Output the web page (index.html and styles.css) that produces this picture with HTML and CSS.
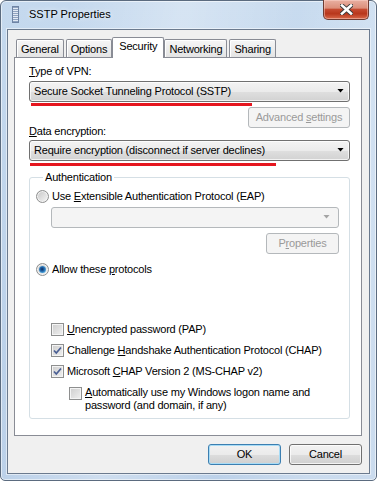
FILE: index.html
```html
<!DOCTYPE html>
<html lang="en">
<head>
    <meta charset="UTF-8">
    <title>SSTP Properties</title>
    <link rel="stylesheet" href="styles.css">
</head>
<body>

    <div class="window">
        <div class="titlebar">
            <svg class="app-icon" width="7" height="17" viewBox="0 0 7 17">
                <rect x="0.5" y="0.5" width="6" height="16" fill="#8fa3c0" stroke="#6f84a4"/>
                <rect x="1" y="2" width="5" height="1" fill="#e3eaf4"/>
                <rect x="1" y="4" width="5" height="1" fill="#e3eaf4"/>
                <rect x="1" y="6" width="5" height="1" fill="#e3eaf4"/>
                <rect x="1" y="8" width="5" height="1" fill="#e3eaf4"/>
                <rect x="1" y="10" width="5" height="1" fill="#e3eaf4"/>
                <rect x="1" y="12" width="5" height="1" fill="#e3eaf4"/>
                <rect x="1" y="14" width="5" height="1" fill="#e3eaf4"/>
            </svg>
            <span class="title">SSTP Properties</span>
            <button class="close" type="button" aria-label="Close">
                <svg width="13" height="11" viewBox="0 0 13 11">
                    <path d="M2 1.5 L11 9.5 M11 1.5 L2 9.5" stroke="#3a3a3a" stroke-width="4.4" stroke-linecap="square" fill="none"/>
                    <path d="M2 1.5 L11 9.5 M11 1.5 L2 9.5" stroke="#fff" stroke-width="2.6" stroke-linecap="square" fill="none"/>
                </svg>
            </button>
        </div>

        <div class="client">
            <ul class="tabs">
                <li class="tab">General</li>
                <li class="tab">Options</li>
                <li class="tab active">Security</li>
                <li class="tab">Networking</li>
                <li class="tab">Sharing</li>
            </ul>

            <div class="panel">
                <div class="label"><u>T</u>ype of VPN:</div>
                <div class="combo">
                    <span>Secure Socket Tunneling Protocol (SSTP)</span>
                    <i class="arrow"></i>
                </div>
                <div class="mark mark-vpn"></div>
                <div class="btn-row">
                    <button class="btn btn-advanced" type="button" disabled>Advanced <u>s</u>ettings</button>
                </div>

                <div class="label label-enc"><u>D</u>ata encryption:</div>
                <div class="combo">
                    <span>Require encryption (disconnect if server declines)</span>
                    <i class="arrow"></i>
                </div>
                <div class="mark mark-enc"></div>

                <fieldset class="group">
                    <legend>Authentication</legend>

                    <div class="option"><span class="radio"></span><span>Use <u>E</u>xtensible Authentication Protocol (EAP)</span></div>
                    <div class="combo combo-disabled">
                        <span></span>
                        <i class="arrow"></i>
                    </div>
                    <div class="btn-row">
                        <button class="btn btn-props" type="button" disabled>P<u>r</u>operties</button>
                    </div>

                    <div class="option option-allow"><span class="radio checked"></span><span>Allow these <u>p</u>rotocols</span></div>

                    <div class="checks">
                        <div class="option"><span class="check"></span><span><u>U</u>nencrypted password (PAP)</span></div>
                        <div class="option"><span class="check checked"></span><span>Challenge <u>H</u>andshake Authentication Protocol (CHAP)</span></div>
                        <div class="option"><span class="check checked"></span><span>Microsoft <u>C</u>HAP Version 2 (MS-CHAP v2)</span></div>
                        <div class="option option-sub"><span class="check"></span><span><u>A</u>utomatically use my Windows logon name and<br>password (and domain, if any)</span></div>
                    </div>
                </fieldset>
            </div>

            <div class="actions">
                <button class="btn btn-default" type="button">OK</button>
                <button class="btn" type="button">Cancel</button>
            </div>
        </div>
    </div>

</body>
</html>
```

FILE: styles.css
```css
* {
  box-sizing: border-box;
}

html, body {
  margin: 0;
  padding: 0;
  background: #fff;
}

body {
  font-family: "Liberation Sans", Arial, sans-serif;
  font-size: 11px;
  letter-spacing: -0.2px;
  color: #000;
}

/* window frame */

.window {
  width: 377px;
  height: 481px;
  display: flex;
  flex-direction: column;
  padding: 0 6px 6px;
  border: 1px solid #5b6b7f;
  border-radius: 6px 6px 5px 5px;
  background:
    linear-gradient(100deg, rgba(255,255,255,0) 15%, rgba(255,255,255,0.3) 40%, rgba(255,255,255,0.05) 65%, rgba(255,255,255,0.25) 85%),
    linear-gradient(#c5d9ee, #b9cfe8);
  box-shadow: inset 0 0 0 1px rgba(255,255,255,0.55);
}

.titlebar {
  height: 28px;
  display: flex;
  align-items: flex-start;
}

.app-icon {
  margin: 5px 0 0 5px;
}

.title {
  margin: 7px 0 0 10px;
  line-height: 13px;
  letter-spacing: 0;
  text-shadow: 0 0 5px rgba(255,255,255,0.9);
}

.close {
  margin: -1px 1px 0 auto;
  width: 46px;
  height: 20px;
  padding: 0;
  display: flex;
  align-items: center;
  justify-content: center;
  border: 1px solid #6e3b32;
  border-top: 0;
  border-radius: 0 0 5px 5px;
  background: linear-gradient(#e9b0a2 0%, #dc8f7b 42%, #c54a30 50%, #b8371c 72%, #d9694a 100%);
  box-shadow: inset 0 0 0 1px rgba(255,220,210,0.45);
}

/* client area */

.client {
  flex: 1;
  display: flex;
  flex-direction: column;
  padding: 7px 7px 8px 6px;
  border: 1px solid #6b7a8e;
  background: #f0f0f0;
  box-shadow: 0 0 0 1px rgba(255,255,255,0.5);
}

.tabs {
  list-style: none;
  margin: 0;
  padding: 0 0 0 2px;
  height: 20px;
  display: flex;
  align-items: flex-end;
  gap: 2px;
}

.tab {
  height: 18px;
  padding: 2px 4px 0;
  line-height: 15px;
  border: 1px solid #898c95;
  border-bottom: 0;
  border-radius: 2px 2px 0 0;
  background: linear-gradient(#f6f6f6, #e4e4e4);
  box-shadow: inset 1px 1px 0 #fff;
}

.tab.active {
  height: 21px;
  margin: 0 -2px -1px;
  padding: 1px 6px 0;
  background: #fff;
  box-shadow: none;
  position: relative;
  z-index: 1;
}

.panel {
  flex: 1;
  padding: 7px 11px 0 14px;
  border: 1px solid #898c95;
  background: #fff;
}

.label {
  line-height: 13px;
  margin-bottom: 3px;
}

.label-enc {
  margin-top: -3px;
  margin-bottom: 2px;
}

/* combo boxes */

.combo {
  height: 21px;
  display: flex;
  align-items: center;
  padding: 0 5px 0 4px;
  line-height: 19px;
  border: 1px solid #707070;
  border-radius: 3px;
  background: linear-gradient(#f3f3f3, #ebebeb 50%, #dfdfdf 51%, #d2d2d2);
  box-shadow: inset 0 0 0 1px rgba(255,255,255,0.7);
}

.combo .arrow {
  margin: 0 0 2px auto;
  width: 7px;
  height: 4px;
  background: #000;
  clip-path: polygon(0 0, 100% 0, 50% 100%);
}

.combo-disabled {
  margin: 4px 0 0 15px;
  border-color: #b4b8bb;
  background: #f4f4f4;
  box-shadow: none;
}

.combo-disabled .arrow {
  background: #a4a4a4;
  margin-right: 3px;
}

.mark {
  height: 3px;
  margin-top: 1px;
  background: #e5161f;
}

.mark-vpn {
  width: 221px;
  margin-left: 2px;
}

.mark-enc {
  width: 246px;
  margin-top: 2px;
  margin-left: 1px;
}

/* buttons */

.btn-row {
  display: flex;
  justify-content: flex-end;
  margin-top: 1px;
}

.btn {
  width: 73px;
  height: 21px;
  padding: 0;
  font: inherit;
  letter-spacing: inherit;
  color: #000;
  line-height: 19px;
  border: 1px solid #707070;
  border-radius: 3px;
  background: linear-gradient(#f2f2f2, #ebebeb 50%, #dddddd 51%, #cfcfcf);
  box-shadow: inset 0 0 0 1px rgba(255,255,255,0.75);
}

.btn:disabled {
  color: #9a9a9a;
  border-color: #b4b8bb;
  background: #f4f4f4;
  box-shadow: none;
}

.btn-advanced {
  width: 102px;
}

.btn-props {
  margin-top: 4px;
}

.btn-default {
  border-color: #3c7fb1;
  box-shadow: inset 0 0 0 1px #a8dcf6;
}

.actions {
  display: flex;
  justify-content: flex-end;
  gap: 8px;
  margin-top: 8px;
}

/* authentication group */

.group {
  margin: 5px 0 0;
  padding: 6px 10px 6px 6px;
  border: 1px solid #d5dfe5;
  border-radius: 3px;
  min-width: 0;
}

.group legend {
  margin-left: 7px;
  padding: 0 2px;
  line-height: 13px;
}

.option {
  display: flex;
  align-items: flex-start;
  gap: 3px;
  line-height: 13px;
}

.option-allow {
  margin-top: 9px;
}

.checks {
  margin: 47px 0 0 15px;
  display: flex;
  flex-direction: column;
  gap: 8px;
}

.option-sub {
  margin-left: 18px;
}

.option-sub .check {
  margin-top: 1px;
}

.radio {
  flex: none;
  width: 13px;
  height: 13px;
  display: flex;
  align-items: center;
  justify-content: center;
  border: 1px solid #8e8f8f;
  border-radius: 50%;
  background: linear-gradient(135deg, #c6c6c6, #f6f6f6);
  box-shadow: inset 0 0 0 1px #f2f2f2;
}

.radio.checked::after {
  content: "";
  width: 7px;
  height: 7px;
  border-radius: 50%;
  background: radial-gradient(circle at 45% 45%, #0e2c5e 0, #1f5fa3 35%, #58b8ec 80%, #9ee0fb 100%);
}

.check {
  flex: none;
  width: 13px;
  height: 13px;
  border: 1px solid #8e8f8f;
  background: linear-gradient(135deg, #cdcdcd, #f0f0f0);
  box-shadow: inset 0 0 0 1px #f4f4f4;
}

.check.checked {
  background:
    url("data:image/svg+xml,%3Csvg xmlns='http://www.w3.org/2000/svg' width='11' height='11'%3E%3Cpath d='M2 5.5 L4.3 8 L9 2.5' stroke='%234a5f94' stroke-width='1.7' fill='none'/%3E%3C/svg%3E") center / 11px 11px no-repeat,
    linear-gradient(135deg, #cdcdcd, #f0f0f0);
}
```
